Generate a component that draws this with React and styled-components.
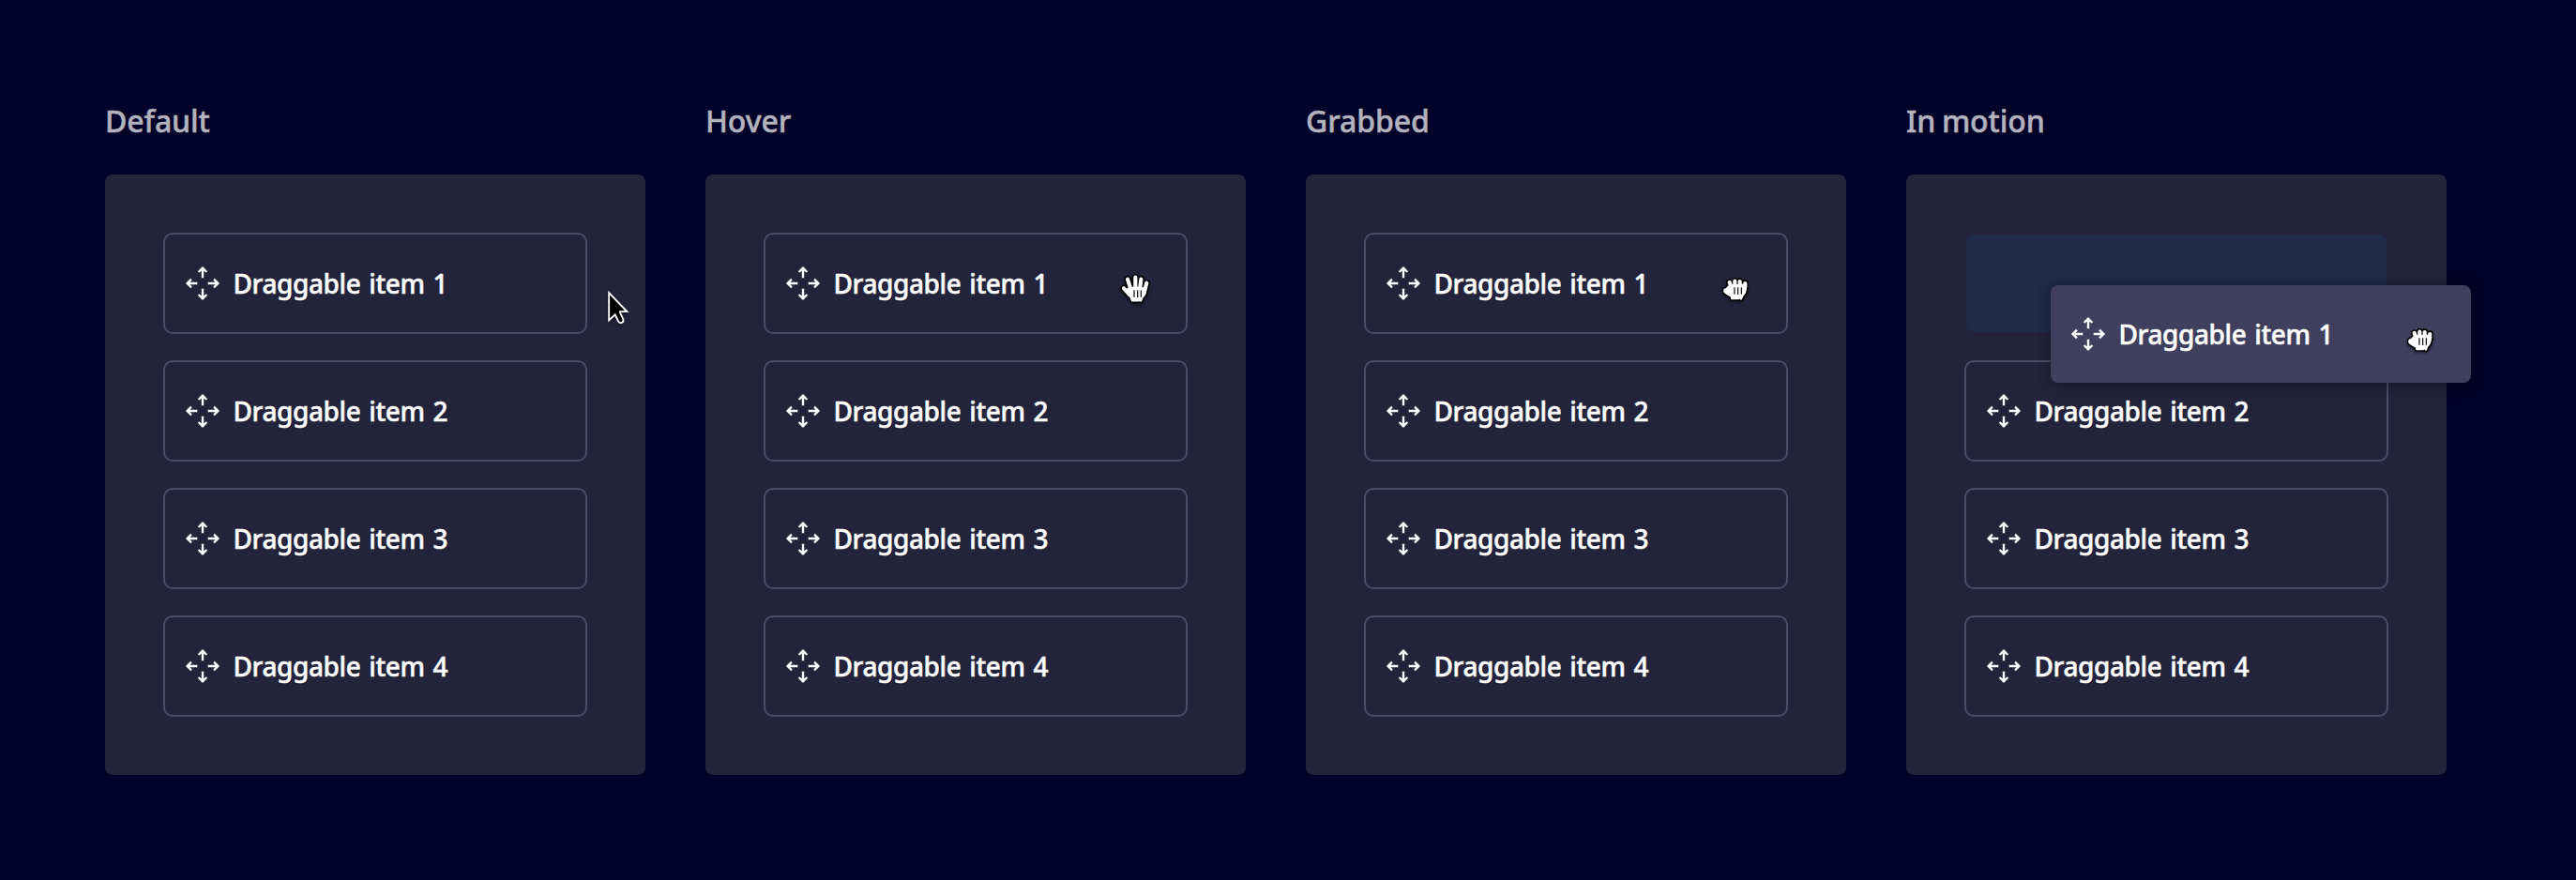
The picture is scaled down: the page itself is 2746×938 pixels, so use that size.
import React from 'react';
import styled, { createGlobalStyle, css } from 'styled-components';

const GlobalStyle = createGlobalStyle`
  * { box-sizing: border-box; }
  body {
    margin: 0;
    background: #000028;
    font-family: "Noto Sans", "Open Sans", sans-serif;
  }
`;

const Page = styled.main`
  display: flex;
  align-items: flex-start;
  gap: 64px;
  width: 2746px;
  height: 938px;
  padding: 109px 112px 0;
  overflow: hidden;
  background: #000028;
`;

const Column = styled.section`
  display: flex;
  flex-direction: column;
  flex: none;
  gap: 37px;
  width: 576px;
`;

const Heading = styled.h2`
  margin: 0;
  color: #b3b3be;
  font-size: 32px;
  font-weight: 500;
  line-height: 40px;
  letter-spacing: -0.1px;
  word-spacing: -1.5px;
  -webkit-text-stroke: 0.5px currentColor;
`;

const Panel = styled.div`
  display: flex;
  flex-direction: column;
  gap: 28px;
  padding: 62px;
  border-radius: 8px;
  background: #23233c;
`;

const itemLayout = css`
  display: flex;
  align-items: center;
  gap: 8px;
  padding: 0 16px;
  color: #fff;
`;

const Item = styled.div`
  ${itemLayout}
  position: relative;
  height: 108px;
  border: 2px solid #4c4c68;
  border-radius: 10px;
`;

const DropSlot = styled.div`
  position: relative;
  height: 108px;
  border: 2px solid transparent;
  border-radius: 10px;
  background: #1f2b49 padding-box;
`;

const FloatingItem = styled.div`
  ${itemLayout}
  position: absolute;
  z-index: 1;
  left: 90px;
  top: 54px;
  width: 448px;
  height: 104px;
  border-radius: 8px;
  background: #403f5e;
  box-shadow: 0 0 16px rgba(0, 0, 0, 0.2), 0 4px 16px rgba(0, 0, 0, 0.14);
`;

const Label = styled.span`
  padding-left: 0.5px;
  font-size: 28px;
  font-weight: 500;
  letter-spacing: -0.4px;
  word-spacing: 2px;
  line-height: 40px;
  white-space: nowrap;
  -webkit-text-stroke: 0.5px currentColor;
`;

const MoveGlyph = styled.svg`
  flex: none;
  width: 48px;
  height: 48px;
  fill: none;
  stroke: currentColor;
  stroke-width: 2.4px;
`;

const Cursor = styled.svg`
  position: absolute;
  left: ${p => (p.$outside ? 454 : 364)}px;
  top: ${p => (p.$outside ? 45 : 30)}px;
  width: 60px;
  height: 60px;
  overflow: visible;
  filter: drop-shadow(0 2px 1.5px rgba(0, 0, 0, 0.4));
`;

function MoveIcon() {
  return (
    <MoveGlyph viewBox="0 0 48 48">
      {[0, 90, 180, 270].map(angle => (
        <path
          key={angle}
          transform={`rotate(${angle} 24 24)`}
          d="M24 7.5V18.3M19.6 12L24 7.6L28.4 12"
        />
      ))}
    </MoveGlyph>
  );
}

function ArrowCursor() {
  return (
    <Cursor $outside viewBox="0 0 180 180">
      <path
        d="M57.5 51V139L77 121L87 142Q91 150 98.500 147Q106 143 102.500 135L93 114.500L93 111.500H115Z"
        fill="#000"
        stroke="#fff"
        strokeWidth="5.500"
      />
    </Cursor>
  );
}

const hands = {
  open: {
    fingers: 'M66 53L78 90M91 47V88M109 53L105 88M127 65L119 94M54 82L72 102',
    palm: 'M66 84L72 80L110 80L125 84L122 101L113 112L109 123L104 119L101 122H80L76 111L66 98Z',
    creases: 'M87 88V110M98 88V111M109 88V110',
  },
  closed: {
    fingers: 'M71 63L77 80M88 59V76M104 60V76M121 66L119 84M58 88L58 92L72 101',
    palm: 'M62 82L70 74L110 70L125 76L121 95L113 106L108 117L103 111L100 115H78L75 106L61 96Z',
    creases: 'M87 79V101M98 79V102M109 79V101',
  },
};

function HandCursor({ pose }) {
  const { fingers, palm, creases } = hands[pose];
  return (
    <Cursor viewBox="0 0 180 180" strokeLinecap="round" strokeLinejoin="round">
      <path d={fingers} fill="none" stroke="#000" strokeWidth="22" />
      <path d={palm} fill="#000" stroke="#000" strokeWidth="15" />
      <path d={fingers} fill="none" stroke="#fff" strokeWidth="12.500" />
      <path d={palm} fill="#fff" stroke="#fff" strokeWidth="5" />
      <path d={creases} fill="none" stroke="#000" strokeWidth="3.500" strokeLinecap="butt" />
    </Cursor>
  );
}

function ItemContent({ number }) {
  return (
    <>
      <MoveIcon />
      <Label>Draggable item {number}</Label>
    </>
  );
}

const states = [
  { title: 'Default', cursor: <ArrowCursor /> },
  { title: 'Hover', cursor: <HandCursor pose="open" /> },
  { title: 'Grabbed', cursor: <HandCursor pose="closed" /> },
  { title: 'In motion', cursor: <HandCursor pose="closed" />, moving: true },
];

export default function App() {
  return (
    <>
      <GlobalStyle />
      <Page>
        {states.map(({ title, cursor, moving }) => (
          <Column key={title}>
            <Heading>{title}</Heading>
            <Panel>
              {moving ? (
                <DropSlot>
                  <FloatingItem>
                    <ItemContent number={1} />
                    {cursor}
                  </FloatingItem>
                </DropSlot>
              ) : (
                <Item>
                  <ItemContent number={1} />
                  {cursor}
                </Item>
              )}
              {[2, 3, 4].map(n => (
                <Item key={n}>
                  <ItemContent number={n} />
                </Item>
              ))}
            </Panel>
          </Column>
        ))}
      </Page>
    </>
  );
}
